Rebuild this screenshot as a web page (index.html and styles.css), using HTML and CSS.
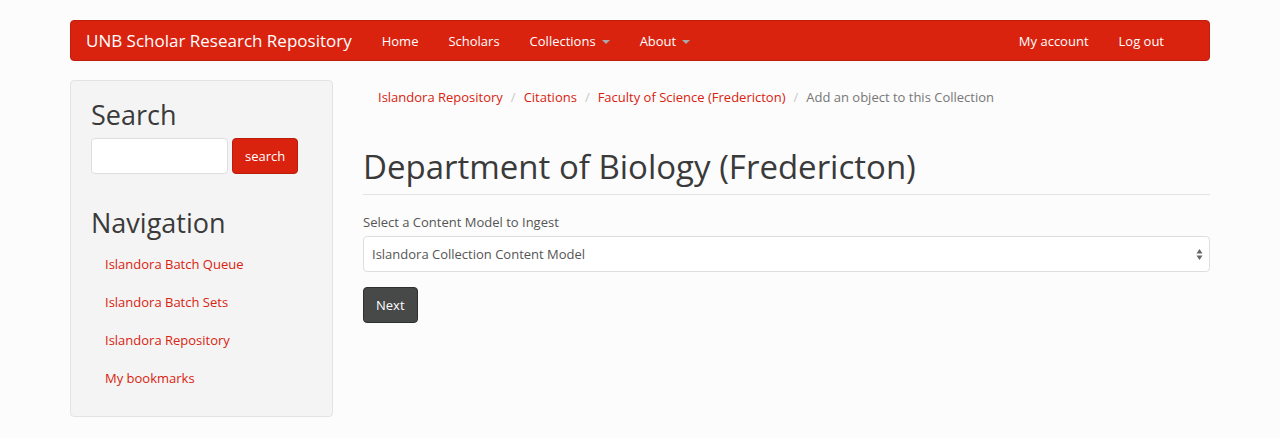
FILE: index.html
```html
<!DOCTYPE html>
<html lang="en">
<head>
<meta charset="utf-8">
<title>Department of Biology (Fredericton)</title>
<link rel="stylesheet" href="styles.css">
</head>
<body>
<div class="container">
  <nav class="navbar">
    <a class="brand" href="#">UNB Scholar Research Repository</a>
    <ul class="nav">
      <li><a href="#">Home</a></li>
      <li><a href="#">Scholars</a></li>
      <li><a href="#">Collections <span class="caret"></span></a></li>
      <li><a href="#">About <span class="caret"></span></a></li>
    </ul>
    <ul class="nav nav-right">
      <li><a href="#">My account</a></li>
      <li><a href="#">Log out</a></li>
    </ul>
  </nav>

  <div class="row">
    <aside class="sidebar">
      <div class="well">
        <h2 class="block-title">Search</h2>
        <form class="search-form">
          <input class="search-input" type="text" aria-label="Search">
          <button class="btn btn-primary" type="button">search</button>
        </form>
        <h2 class="block-title nav-title">Navigation</h2>
        <ul class="nav-stacked">
          <li><a href="#">Islandora Batch Queue</a></li>
          <li><a href="#">Islandora Batch Sets</a></li>
          <li><a href="#">Islandora Repository</a></li>
          <li><a href="#">My bookmarks</a></li>
        </ul>
      </div>
    </aside>

    <main class="main">
      <ol class="breadcrumb">
        <li><a href="#">Islandora Repository</a></li>
        <li><a href="#">Citations</a></li>
        <li><a href="#">Faculty of Science (Fredericton)</a></li>
        <li class="active">Add an object to this Collection</li>
      </ol>
      <header class="page-header">
        <h1>Department of Biology (Fredericton)</h1>
      </header>
      <form class="ingest-form">
        <div class="form-group">
          <label class="control-label" for="model">Select a Content Model to Ingest</label>
          <div class="select-wrap">
            <select id="model" class="form-control">
              <option>Islandora Collection Content Model</option>
            </select>
            <svg class="select-arrows" width="7" height="13" viewBox="0 0 7 13" aria-hidden="true">
              <path d="M3.5 1 L6.5 5.5 L0.5 5.5 Z" fill="#666"/>
              <path d="M3.5 12 L6.5 7.5 L0.5 7.5 Z" fill="#666"/>
            </svg>
          </div>
        </div>
        <button class="btn btn-default" type="button">Next</button>
      </form>
    </main>
  </div>
</div>
</body>
</html>
```

FILE: styles.css
```css
* { box-sizing: border-box; }

html, body {
  margin: 0;
  padding: 0;
}

body {
  background: #fcfcfc;
  color: #3a3a3a;
  font-family: "Open Sans", "Liberation Sans", Arial, sans-serif;
  font-size: 13px;
  line-height: 18px;
}

a { color: #d9230f; text-decoration: none; }

.container {
  width: 1170px;
  margin: 0 auto;
  padding: 20px 15px 0;
}

/* Navbar */
.navbar {
  display: flex;
  align-items: center;
  height: 41px;
  background: #d9230f;
  border: 1px solid #c01f0d;
  border-radius: 4px;
  margin-bottom: 19px;
}

.brand {
  color: #fff;
  font-size: 17px;
  line-height: 20px;
  padding: 1px 15px 0;
}

.nav {
  display: flex;
  list-style: none;
  margin: 0;
  padding: 0;
}

.nav a {
  display: flex;
  align-items: center;
  color: #fff;
  padding: 10px 15px 9px;
  line-height: 20px;
}

.nav-right {
  margin-left: auto;
  margin-right: 30px;
}

.caret {
  display: inline-block;
  width: 0;
  height: 0;
  margin-left: 6px;
  margin-top: 1px;
  border-top: 4px solid #a8a8a8;
  border-left: 4px solid transparent;
  border-right: 4px solid transparent;
}

/* Layout */
.row {
  display: flex;
  gap: 30px;
}

.sidebar {
  width: 263px;
  flex: none;
}

.main {
  flex: 1;
  min-width: 0;
}

/* Well */
.well {
  background: #f4f4f4;
  border: 1px solid #e3e3e3;
  border-radius: 4px;
  padding: 19px 19px 19px 20px;
}

.block-title {
  margin: 0 0 8px;
  font-size: 27px;
  font-weight: 400;
  line-height: 30px;
  color: #3a3a3a;
}

.search-form {
  display: flex;
  gap: 4px;
  margin: 0 0 34px;
}

.search-input {
  width: 137px;
  height: 36px;
  border: 1px solid #dedede;
  border-radius: 4px;
  background: #fff;
  font: inherit;
  padding: 8px 12px;
}

.btn {
  font: inherit;
  height: 36px;
  padding: 0 12px;
  border-radius: 4px;
  color: #fff;
  cursor: pointer;
}

.btn-primary {
  background: #d9230f;
  border: 1px solid #b81d0c;
}

.btn-default {
  background: #474949;
  border: 1px solid #2e2f2f;
}

.nav-title { margin-bottom: 7px; }

.nav-stacked {
  list-style: none;
  margin: 0;
  padding: 0;
}

.nav-stacked a {
  display: block;
  padding: 10px 14px;
  line-height: 18px;
}

/* Breadcrumb */
.breadcrumb {
  display: flex;
  list-style: none;
  margin: 0 0 35px;
  padding: 8px 15px;
  line-height: 18px;
}

.breadcrumb li + li::before {
  content: "/";
  color: #c8c8c8;
  padding: 0 8px 0 8px;
}

.breadcrumb .active { color: #777; }

/* Page header */
.page-header {
  border-bottom: 1px solid #e4e4e4;
  padding-bottom: 9px;
  margin-bottom: 18px;
}

.page-header h1 {
  margin: 0;
  font-size: 33px;
  font-weight: 400;
  line-height: 36px;
  color: #3a3a3a;
}

/* Form */
.form-group { margin-bottom: 15px; }

.control-label {
  display: block;
  margin-bottom: 5px;
  font-weight: 400;
  color: #555;
}

.select-wrap { position: relative; }

.form-control {
  display: block;
  width: 100%;
  height: 36px;
  padding: 0 8px;
  font: inherit;
  color: #555;
  background: #fff;
  border: 1px solid #dedede;
  border-radius: 4px;
  -webkit-appearance: none;
  appearance: none;
}

.select-arrows {
  position: absolute;
  right: 7px;
  top: 12px;
}
```
